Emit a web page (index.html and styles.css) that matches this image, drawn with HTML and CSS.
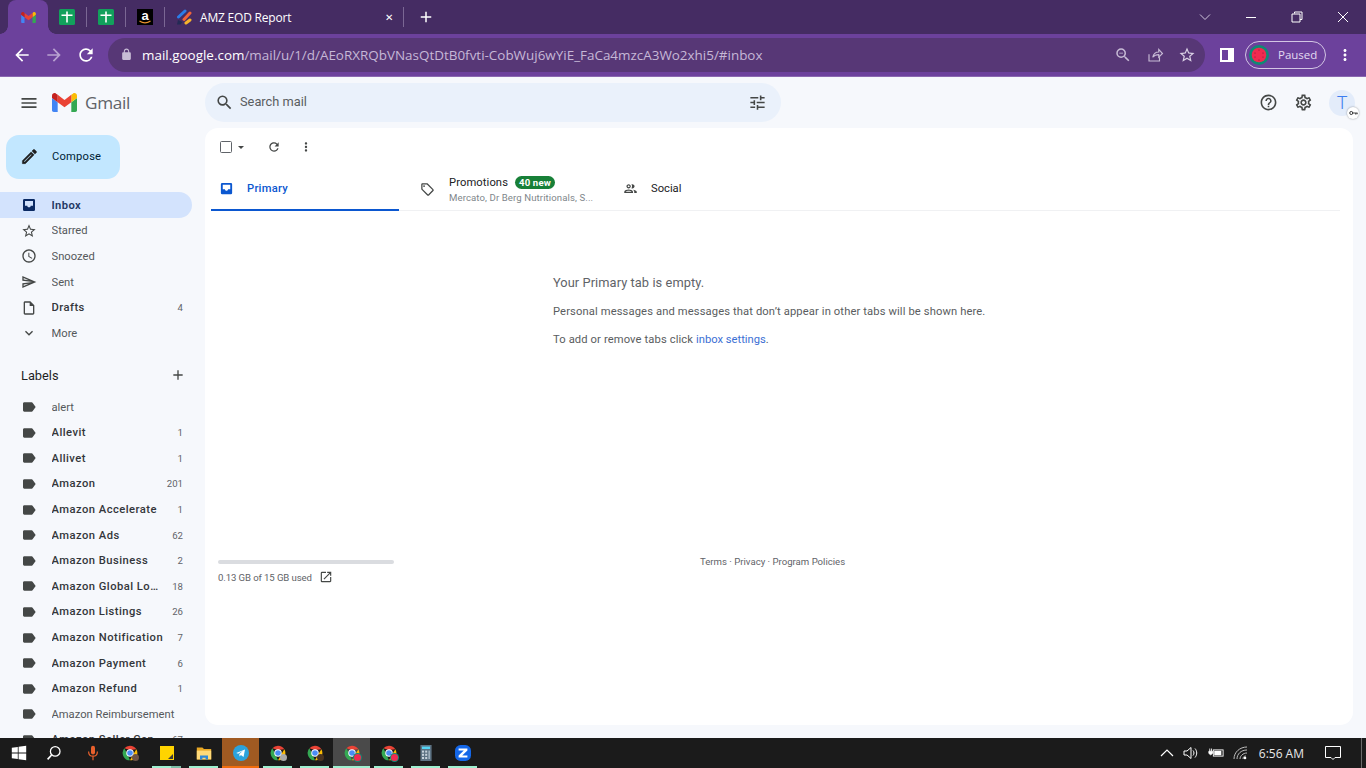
FILE: index.html
```html
<!DOCTYPE html>
<html lang="en">
<head>
<meta charset="utf-8">
<title>Gmail</title>
<link rel="stylesheet" href="styles.css">
</head>
<body>
<svg class="defs" width="0" height="0" aria-hidden="true">
  <symbol id="i-menu" viewBox="0 0 24 24"><path d="M3 18h18v-2H3v2zm0-5h18v-2H3v2zm0-7v2h18V6H3z"/></symbol>
  <symbol id="i-search" viewBox="0 0 24 24"><path d="M15.5 14h-.79l-.28-.27A6.471 6.471 0 0 0 16 9.5 6.5 6.5 0 1 0 9.5 16c1.61 0 3.09-.59 4.23-1.57l.27.28v.79l5 4.99L20.49 19l-4.99-5zm-6 0C7.01 14 5 11.99 5 9.5S7.01 5 9.5 5 14 7.01 14 9.5 11.99 14 9.5 14z"/></symbol>
  <symbol id="i-tune" viewBox="0 0 24 24"><path d="M3 17v2h6v-2H3zM3 5v2h10V5H3zm10 16v-2h8v-2h-8v-2h-2v6h2zM7 9v2H3v2h4v2h2V9H7zm14 4v-2H11v2h10zm-6-4h2V7h4V5h-4V3h-2v6z"/></symbol>
  <symbol id="i-help" viewBox="0 0 24 24"><path d="M11 18h2v-2h-2v2zm1-16C6.48 2 2 6.48 2 12s4.48 10 10 10 10-4.48 10-10S17.52 2 12 2zm0 18c-4.41 0-8-3.59-8-8s3.59-8 8-8 8 3.59 8 8-3.59 8-8 8zm0-14c-2.21 0-4 1.79-4 4h2c0-1.1.9-2 2-2s2 .9 2 2c0 2-3 1.75-3 5h2c0-2.25 3-2.5 3-5 0-2.21-1.79-4-4-4z"/></symbol>
  <symbol id="i-gear" viewBox="0 0 24 24"><path d="M19.43 12.98c.04-.32.07-.64.07-.98 0-.34-.03-.66-.07-.98l2.11-1.65c.19-.15.24-.42.12-.64l-2-3.46c-.09-.16-.26-.25-.44-.25-.06 0-.12.01-.17.03l-2.49 1c-.52-.4-1.08-.73-1.69-.98l-.38-2.65C14.46 2.18 14.25 2 14 2h-4c-.25 0-.46.18-.49.42l-.38 2.65c-.61.25-1.17.59-1.69.98l-2.49-1c-.06-.02-.12-.03-.18-.03-.17 0-.34.09-.43.25l-2 3.46c-.13.22-.07.49.12.64l2.11 1.65c-.04.32-.07.65-.07.98 0 .33.03.66.07.98l-2.11 1.65c-.19.15-.24.42-.12.64l2 3.46c.09.16.26.25.44.25.06 0 .12-.01.17-.03l2.49-1c.52.4 1.08.73 1.69.98l.38 2.65c.03.24.24.42.49.42h4c.25 0 .46-.18.49-.42l.38-2.65c.61-.25 1.17-.59 1.69-.98l2.49 1c.06.02.12.03.18.03.17 0 .34-.09.43-.25l2-3.46c.12-.22.07-.49-.12-.64l-2.11-1.65zm-1.98-1.71c.04.31.05.52.05.73 0 .21-.02.43-.05.73l-.14 1.13.89.7 1.08.84-.7 1.21-1.27-.51-1.04-.42-.9.68c-.43.32-.84.56-1.25.73l-1.06.43-.16 1.13-.2 1.35h-1.4l-.19-1.35-.16-1.13-1.06-.43c-.43-.18-.83-.41-1.23-.71l-.91-.7-1.06.43-1.27.51-.7-1.21 1.08-.84.89-.7-.14-1.13c-.03-.31-.05-.54-.05-.74s.02-.43.05-.73l.14-1.13-.89-.7-1.08-.84.7-1.21 1.27.51 1.04.42.9-.68c.43-.32.84-.56 1.25-.73l1.06-.43.16-1.13.2-1.35h1.39l.19 1.35.16 1.13 1.06.43c.43.18.83.41 1.23.71l.91.7 1.06-.43 1.27-.51.7 1.21-1.07.85-.89.7.14 1.13zM12 8c-2.21 0-4 1.79-4 4s1.79 4 4 4 4-1.79 4-4-1.79-4-4-4zm0 6c-1.1 0-2-.9-2-2s.9-2 2-2 2 .9 2 2-.9 2-2 2z"/></symbol>
  <symbol id="i-inbox" viewBox="0 0 24 24"><path fill-rule="evenodd" d="M19 3H5a2 2 0 0 0-2 2v14a2 2 0 0 0 2 2h14a2 2 0 0 0 2-2V5a2 2 0 0 0-2-2zM6 6h12v7h-3.5c0 1.4-1.1 2.5-2.5 2.5S9.500 14.400 9.500 13H6z"/></symbol>
  <symbol id="i-star" viewBox="0 0 24 24"><path d="M22 9.240l-7.190-.62L12 2 9.190 8.630 2 9.240l5.460 4.730L5.820 21 12 17.270 18.180 21l-1.630-7.030L22 9.240zM12 15.400l-3.760 2.270 1-4.280-3.320-2.880 4.380-.38L12 6.100l1.710 4.040 4.380.38-3.320 2.880 1 4.280L12 15.400z"/></symbol>
  <symbol id="i-clock" viewBox="0 0 24 24"><path d="M11.990 2C6.470 2 2 6.480 2 12s4.470 10 9.990 10C17.520 22 22 17.520 22 12S17.520 2 11.990 2zM12 20c-4.420 0-8-3.580-8-8s3.580-8 8-8 8 3.580 8 8-3.580 8-8 8zm.5-13H11v6l5.250 3.150.75-1.230-4.500-2.670z"/></symbol>
  <symbol id="i-send" viewBox="0 0 24 24"><path d="M4.010 6.030l7.510 3.220-7.520-1 .01-2.220m7.500 8.720L4 17.970v-2.220l7.510-1M2.010 3L2 10l15 2-15 2 .01 7L23 12 2.010 3z"/></symbol>
  <symbol id="i-draft" viewBox="0 0 24 24"><path d="M14 2H6c-1.100 0-2 .9-2 2v16c0 1.100.9 2 2 2h12c1.100 0 2-.9 2-2V8l-6-6zM6 20V4h7v5h5v11H6z"/></symbol>
  <symbol id="i-down" viewBox="0 0 24 24"><path d="M16.590 8.590L12 13.170 7.410 8.590 6 10l6 6 6-6z"/></symbol>
  <symbol id="i-label" viewBox="0 0 24 24"><path d="M17.630 5.840C17.270 5.330 16.670 5 16 5L5 5.010C3.900 5.010 3 5.900 3 7v10c0 1.100.9 1.990 2 1.990L16 19c.67 0 1.270-.33 1.630-.84L22 12l-4.370-6.160z"/></symbol>
  <symbol id="i-add" viewBox="0 0 24 24"><path d="M19 13h-6v6h-2v-6H5v-2h6V5h2v6h6v2z"/></symbol>
  <symbol id="i-refresh" viewBox="0 0 24 24"><path d="M17.650 6.350A7.958 7.958 0 0 0 12 4c-4.420 0-7.990 3.580-7.990 8s3.570 8 7.990 8c3.730 0 6.840-2.550 7.730-6h-2.080A5.990 5.990 0 0 1 12 18c-3.310 0-6-2.690-6-6s2.690-6 6-6c1.660 0 3.140.69 4.220 1.780L13 11h7V4l-2.350 2.350z"/></symbol>
  <symbol id="i-dots" viewBox="0 0 24 24"><path d="M12 8c1.100 0 2-.9 2-2s-.9-2-2-2-2 .9-2 2 .9 2 2 2zm0 2c-1.100 0-2 .9-2 2s.9 2 2 2 2-.9 2-2-.9-2-2-2zm0 6c-1.100 0-2 .9-2 2s.9 2 2 2 2-.9 2-2-.9-2-2-2z"/></symbol>
  <symbol id="i-tag" viewBox="0 0 24 24"><path d="M21.410 11.580l-9-9C12.050 2.220 11.550 2 11 2H4c-1.100 0-2 .9-2 2v7c0 .55.22 1.050.59 1.420l9 9c.36.36.86.58 1.410.58s1.050-.22 1.410-.59l7-7c.37-.36.59-.86.59-1.410s-.23-1.060-.59-1.420zM13 20.010L4 11V4h7v-.01l9 9-7 7.020z"/><circle cx="6.500" cy="6.500" r="1.500"/></symbol>
  <symbol id="i-people" viewBox="0 0 24 24"><path d="M9 13.750c-2.340 0-7 1.170-7 3.500V19h14v-1.750c0-2.330-4.660-3.500-7-3.500zM4.340 17c.84-.58 2.870-1.250 4.660-1.250s3.820.67 4.660 1.250H4.340zM9 12c1.930 0 3.500-1.570 3.500-3.500S10.930 5 9 5 5.500 6.570 5.500 8.500 7.070 12 9 12zm0-5c.83 0 1.500.67 1.500 1.500S9.830 10 9 10s-1.500-.67-1.500-1.500S8.170 7 9 7zm7.040 6.810c1.160.84 1.960 1.960 1.960 3.440V19h4v-1.750c0-2.020-3.500-3.170-5.960-3.440zM15 12c1.930 0 3.500-1.570 3.500-3.500S16.930 5 15 5c-.54 0-1.040.13-1.500.35.63.89 1 1.980 1 3.150s-.37 2.260-1 3.150c.46.22.96.35 1.500.35z"/></symbol>
  <symbol id="i-open" viewBox="0 0 24 24"><path d="M19 19H5V5h7V3H5a2 2 0 0 0-2 2v14a2 2 0 0 0 2 2h14c1.100 0 2-.9 2-2v-7h-2v7zM14 3v2h3.590l-9.830 9.830 1.410 1.410L19 6.410V10h2V3h-7z"/></symbol>
  <symbol id="i-edit" viewBox="0 0 24 24"><path stroke="currentColor" stroke-width=".6" d="M14.060 9.020l.92.92L5.920 19H5v-.92l9.060-9.060M17.660 3c-.25 0-.51.1-.7.29l-1.830 1.830 3.750 3.750 1.830-1.830c.39-.39.39-1.020 0-1.410l-2.340-2.340c-.2-.2-.45-.29-.71-.29zm-3.600 3.190L3 17.250V21h3.750L17.810 9.940l-3.750-3.750z"/></symbol>
  <symbol id="i-m" viewBox="52 42 88 66">
    <path fill="#4285f4" d="M58 108h14V74L52 59v43c0 3.320 2.690 6 6 6"/>
    <path fill="#34a853" d="M120 108h14c3.320 0 6-2.690 6-6V59l-20 15"/>
    <path fill="#fbbc04" d="M120 48v26l20-15v-8c0-7.420-8.470-11.650-14.400-7.200"/>
    <path fill="#ea4335" d="M72 74V48l24 18 24-18v26L96 92"/>
    <path fill="#c5221f" d="M52 51v8l20 15V48l-5.600-4.200c-5.940-4.450-14.400-.22-14.400 7.200"/>
  </symbol>
  <symbol id="i-sheet" viewBox="0 0 16 16">
    <rect width="16" height="16" rx="1.500" fill="#12a05c"/>
    <path fill="#fff" d="M7.200 2.500h1.600v3h4.700v1.500H8.800V13.500H7.200V7H2.500V5.500h4.700z"/>
  </symbol>
  <symbol id="i-chrome" viewBox="0 0 24 24">
    <path fill="#ea4335" d="M12 1a11 11 0 0 1 9.530 5.500L12 7.500 3.500 5A11 11 0 0 1 12 1z"/>
    <path fill="#fbbc04" d="M21.530 6.500A11 11 0 0 1 12 23l5-9z"/>
    <path fill="#34a853" d="M3.500 5L8 14l4 9A11 11 0 0 1 3.500 5z"/>
    <circle cx="12" cy="12" r="5.600" fill="#fff"/><circle cx="12" cy="12" r="4.200" fill="#4a8df5"/>
  </symbol>
</svg>

<header class="tabstrip">
  <div class="tab-active"><svg class="fav-m"><use href="#i-m"/></svg></div>
  <div class="pin"><svg class="fav"><use href="#i-sheet"/></svg></div>
  <div class="pin"><svg class="fav"><use href="#i-sheet"/></svg></div>
  <div class="pin">
    <svg class="fav" viewBox="0 0 16 16">
      <rect width="16" height="16" fill="#000"/>
      <text class="amz-a" x="8" y="11" text-anchor="middle">a</text>
      <path d="M2.500 12c3.500 2.300 7.500 2.300 11 0" fill="none" stroke="#e8912d" stroke-width="1.300"/>
    </svg>
  </div>
  <div class="pin-wide">
    <svg class="fav" viewBox="0 0 16 16">
      <path fill="#232a55" d="M1 15.500l1-4.500 4.500 2-2 2.500z"/>
      <path d="M2.500 8L9 2" stroke="#2b7de9" stroke-width="3" stroke-linecap="round"/>
      <path d="M8 10.500L14 4" stroke="#f0623a" stroke-width="3" stroke-linecap="round"/>
      <path d="M10 14l4-3" stroke="#f7b32b" stroke-width="3" stroke-linecap="round"/>
    </svg>
    <span class="tab-title">AMZ EOD Report</span>
    <span class="tab-x">✕</span>
  </div>
  <div class="newtab"><svg class="ico18 white"><use href="#i-add"/></svg></div>
  <div class="winctl">
    <svg class="wc" viewBox="0 0 12 12"><path d="M1 3.500l5 5 5-5" fill="none" stroke="#cfc6dc"/></svg>
    <svg class="wc" viewBox="0 0 12 12"><path d="M1 6.500h10" stroke="#fff"/></svg>
    <svg class="wc" viewBox="0 0 12 12"><path d="M3.500 2.500V1h7.500v7.500H9M1 3h8v8H1z" fill="none" stroke="#fff"/></svg>
    <svg class="wc" viewBox="0 0 12 12"><path d="M1 1l10 10M11 1L1 11" stroke="#fff"/></svg>
  </div>
</header>

<nav class="toolbar">
  <svg class="tb" viewBox="0 0 24 24"><path fill="#fff" d="M20 11H7.830l5.590-5.590L12 4l-8 8 8 8 1.410-1.410L7.830 13H20v-2z"/></svg>
  <svg class="tb dim" viewBox="0 0 24 24"><path fill="#b8a2d0" d="M12 4l-1.410 1.410L16.170 11H4v2h12.170l-5.580 5.590L12 20l8-8z"/></svg>
  <svg class="tb white"><use href="#i-refresh"/></svg>
  <div class="omni">
    <svg class="lock" viewBox="0 0 24 24"><path fill="#c8bcd6" d="M18 8h-1V6c0-2.760-2.240-5-5-5S7 3.240 7 6v2H6c-1.100 0-2 .9-2 2v10c0 1.100.9 2 2 2h12c1.100 0 2-.9 2-2V10c0-1.100-.9-2-2-2zM9 6c0-1.660 1.340-3 3-3s3 1.340 3 3v2H9V6z"/></svg>
    <span class="url"><span class="url-host">mail.google.com</span>/mail/u/1/d/AEoRXRQbVNasQtDtB0fvti-CobWuj6wYiE_FaCa4mzcA3Wo2xhi5/#inbox</span>
    <div class="omni-icons">
      <svg class="om" viewBox="0 0 24 24"><path fill="#c8bcd6" d="M15.500 14h-.79l-.28-.27A6.471 6.471 0 0 0 16 9.500 6.500 6.500 0 1 0 9.500 16c1.610 0 3.090-.59 4.230-1.570l.27.28v.79l5 4.990L20.490 19l-4.990-5zm-6 0C7.010 14 5 11.990 5 9.500S7.010 5 9.500 5 14 7.010 14 9.500 11.990 14 9.500 14zM7 9h5v1H7z"/></svg>
      <svg class="om" viewBox="0 0 24 24"><path fill="none" stroke="#c8bcd6" stroke-width="1.500" d="M4 11v9h14v-5M9 15c1-5 4-7 8-7V4.500l5 5.500-5 5v-3.500c-3.500 0-6 1-8 3.500z"/></svg>
      <svg class="om" viewBox="0 0 24 24"><path fill="#d9d0e4" d="M22 9.240l-7.190-.62L12 2 9.190 8.630 2 9.240l5.460 4.730L5.820 21 12 17.270 18.180 21l-1.630-7.030L22 9.240zM12 15.400l-3.760 2.270 1-4.280-3.320-2.880 4.380-.38L12 6.100l1.710 4.040 4.380.38-3.320 2.880 1 4.280L12 15.400z"/></svg>
    </div>
  </div>
  <svg class="panel" viewBox="0 0 14 14"><path fill="#fff" fill-rule="evenodd" d="M0 0h14v14H0zM2 2v10h6V2z"/></svg>
  <div class="profile">
    <svg class="melon" viewBox="0 0 20 20">
      <circle cx="10" cy="10" r="10" fill="#0f8a74"/><circle cx="10" cy="10" r="7.300" fill="#ef2b50"/>
      <g fill="#7d1a36"><circle cx="10" cy="5" r=".6"/><circle cx="14" cy="8" r=".6"/><circle cx="14" cy="12" r=".6"/><circle cx="10" cy="15" r=".6"/><circle cx="6" cy="12" r=".6"/><circle cx="6" cy="8" r=".6"/></g>
    </svg>
    <span class="paused">Paused</span>
  </div>
  <svg class="kebab white"><use href="#i-dots"/></svg>
</nav>

<div class="gmail">
  <aside class="side">
    <div class="brand">
      <svg class="ico20 grey"><use href="#i-menu"/></svg>
      <svg class="logo"><use href="#i-m"/></svg>
      <span class="wordmark">Gmail</span>
    </div>
    <button class="compose"><svg class="ico19 ink"><use href="#i-edit"/></svg><span>Compose</span></button>
    <ul class="nav">
      <li class="row current"><svg class="ri navy"><use href="#i-inbox"/></svg><span class="name">Inbox</span></li>
      <li class="row"><svg class="ri"><use href="#i-star"/></svg><span class="name">Starred</span></li>
      <li class="row"><svg class="ri"><use href="#i-clock"/></svg><span class="name">Snoozed</span></li>
      <li class="row"><svg class="ri"><use href="#i-send"/></svg><span class="name">Sent</span></li>
      <li class="row strong"><svg class="ri"><use href="#i-draft"/></svg><span class="name">Drafts</span><span class="count">4</span></li>
      <li class="row"><svg class="ri"><use href="#i-down"/></svg><span class="name">More</span></li>
    </ul>
    <div class="labels-head"><span>Labels</span><svg class="ico16 grey"><use href="#i-add"/></svg></div>
    <ul class="nav">
      <li class="row"><svg class="ri"><use href="#i-label"/></svg><span class="name">alert</span></li>
      <li class="row strong"><svg class="ri"><use href="#i-label"/></svg><span class="name">Allevit</span><span class="count">1</span></li>
      <li class="row strong"><svg class="ri"><use href="#i-label"/></svg><span class="name">Allivet</span><span class="count">1</span></li>
      <li class="row strong"><svg class="ri"><use href="#i-label"/></svg><span class="name">Amazon</span><span class="count">201</span></li>
      <li class="row strong"><svg class="ri"><use href="#i-label"/></svg><span class="name">Amazon Accelerate</span><span class="count">1</span></li>
      <li class="row strong"><svg class="ri"><use href="#i-label"/></svg><span class="name">Amazon Ads</span><span class="count">62</span></li>
      <li class="row strong"><svg class="ri"><use href="#i-label"/></svg><span class="name">Amazon Business</span><span class="count">2</span></li>
      <li class="row strong"><svg class="ri"><use href="#i-label"/></svg><span class="name">Amazon Global Logistics</span><span class="count">18</span></li>
      <li class="row strong"><svg class="ri"><use href="#i-label"/></svg><span class="name">Amazon Listings</span><span class="count">26</span></li>
      <li class="row strong"><svg class="ri"><use href="#i-label"/></svg><span class="name">Amazon Notification</span><span class="count">7</span></li>
      <li class="row strong"><svg class="ri"><use href="#i-label"/></svg><span class="name">Amazon Payment</span><span class="count">6</span></li>
      <li class="row strong"><svg class="ri"><use href="#i-label"/></svg><span class="name">Amazon Refund</span><span class="count">1</span></li>
      <li class="row"><svg class="ri"><use href="#i-label"/></svg><span class="name">Amazon Reimbursement</span></li>
      <li class="row strong"><svg class="ri"><use href="#i-label"/></svg><span class="name">Amazon Seller Central</span><span class="count">67</span></li>
    </ul>
  </aside>

  <div class="content">
    <div class="topbar">
      <div class="searchbox">
        <svg class="ico19 dark"><use href="#i-search"/></svg>
        <span class="placeholder">Search mail</span>
        <svg class="ico19 dark tune"><use href="#i-tune"/></svg>
      </div>
      <div class="top-actions">
        <svg class="ico19 grey"><use href="#i-help"/></svg>
        <svg class="ico19 grey"><use href="#i-gear"/></svg>
        <div class="avatar">
          <span>T</span>
          <span class="key"><svg class="key-ico" viewBox="0 0 10 6"><circle cx="2.500" cy="3" r="1.700" fill="none" stroke="#222" stroke-width="1"/><path d="M4 3h5.500M7.500 3v1.800M9 3v1.400" stroke="#222" stroke-width=".9" fill="none"/></svg></span>
        </div>
      </div>
    </div>
    <main class="card">
      <div class="actions">
        <span class="checkbox"></span><span class="caret"></span>
        <svg class="ico14 dark refresh"><use href="#i-refresh"/></svg>
        <svg class="ico14 dark dots"><use href="#i-dots"/></svg>
      </div>
      <div class="tabs">
        <div class="gtab primary"><svg class="ti blue"><use href="#i-inbox"/></svg><span>Primary</span></div>
        <div class="gtab promos">
          <svg class="ti"><use href="#i-tag"/></svg>
          <div class="promo-text">
            <div class="promo-line"><span>Promotions</span><span class="badge">40 new</span></div>
            <div class="promo-sub">Mercato, Dr Berg Nutritionals, S...</div>
          </div>
        </div>
        <div class="gtab social"><svg class="ti"><use href="#i-people"/></svg><span>Social</span></div>
      </div>
      <section class="empty">
        <h2>Your Primary tab is empty.</h2>
        <p>Personal messages and messages that don’t appear in other tabs will be shown here.</p>
        <p>To add or remove tabs click <a>inbox settings</a>.</p>
      </section>
      <footer class="foot">
        <div class="storage">
          <div class="meter"></div>
          <div class="used"><span>0.13 GB of 15 GB used</span><svg class="ico14 grey"><use href="#i-open"/></svg></div>
        </div>
        <div class="terms">Terms · Privacy · Program Policies</div>
      </footer>
    </main>
  </div>
</div>

<footer class="taskbar">
  <div class="tk"><svg class="t20" viewBox="0 0 20 20"><path fill="#fff" d="M1 3.500l7.500-1V9.500H1zM9.500 2.300L19 1v8.500H9.500zM1 10.500h7.500v7L1 16.500zM9.500 10.500H19V19l-9.500-1.300z"/></svg></div>
  <div class="tk"><svg class="t20 search-ico" viewBox="0 0 20 20"><circle cx="11.500" cy="8" r="6" fill="none" stroke="#fff" stroke-width="1.600"/><path d="M7 12.500L2 18" stroke="#fff" stroke-width="2"/></svg></div>
  <div class="tk"><svg class="t20" viewBox="0 0 20 20"><rect x="7.500" y="1" width="5" height="11" rx="2.500" fill="#e8602c"/><path d="M4.500 8c0 4 2.500 6 5.500 6s5.500-2 5.500-6M10 14v5" fill="none" stroke="#e8602c" stroke-width="1.500"/></svg></div>
  <div class="tk"><svg class="t20"><use href="#i-chrome"/></svg><span class="tb-badge brown"></span></div>
  <div class="tk on split"><svg class="t14" viewBox="0 0 14 14"><path fill="#ffd400" d="M0 0h14v14H0z"/><path fill="#3a3a3a" d="M13 8v5H8z"/></svg></div>
  <div class="tk on"><svg class="t20" viewBox="0 0 20 20"><path fill="#e9a825" d="M1 3h7l2 2h9v13H1z"/><path fill="#ffd978" d="M1 7h18v11H1z"/><path fill="#2f88d8" d="M5 13h10v5h-3v-2H8v2H5z"/></svg></div>
  <div class="tk tg"><svg class="t20" viewBox="0 0 20 20"><circle cx="10" cy="10" r="10" fill="#2ca3dc"/><path fill="#fff" d="M4 10l11-4.500-1.800 9.500-3.300-2.400-1.700 1.700-.3-3 4.600-4-6 3.500z"/></svg></div>
  <div class="tk on"><svg class="t20"><use href="#i-chrome"/></svg><span class="tb-badge grey2"></span></div>
  <div class="tk on"><svg class="t20"><use href="#i-chrome"/></svg><span class="tb-badge dark2"></span></div>
  <div class="tk on cur"><svg class="t20"><use href="#i-chrome"/></svg><span class="tb-badge melon2"></span></div>
  <div class="tk on"><svg class="t20"><use href="#i-chrome"/></svg><span class="tb-badge melon2"></span></div>
  <div class="tk on"><svg class="t20" viewBox="0 0 20 20"><rect x="3" y="0" width="14" height="20" fill="#5d7384"/><rect x="5" y="2" width="10" height="3" fill="#54d5f5"/><g fill="#c7d3dc"><rect x="5" y="7" width="2.500" height="2.500"/><rect x="9" y="7" width="2.500" height="2.500"/><rect x="5" y="11" width="2.500" height="2.500"/><rect x="9" y="11" width="2.500" height="2.500"/><rect x="5" y="15" width="2.500" height="2.500"/><rect x="9" y="15" width="2.500" height="2.500"/></g><rect x="13" y="7" width="2" height="10.500" fill="#9fb1bf"/></svg></div>
  <div class="tk on"><svg class="t20" viewBox="0 0 20 20"><rect width="20" height="20" rx="7" fill="#1467e8"/><path fill="#fff" d="M4.500 4.500h11v2.500L9 13h6.500v2.500h-11V13L11 7H4.500z"/></svg></div>
  <div class="tray">
    <svg class="ty chev" viewBox="0 0 16 16"><path d="M2 11l6-6 6 6" fill="none" stroke="#fff" stroke-width="1.200"/></svg>
    <svg class="ty" viewBox="0 0 16 16"><path d="M1 6h3l4-3.500v11L4 10H1zM10 5.500c1.300 1.500 1.300 3.500 0 5M12 3.500c2.300 2.700 2.300 6.300 0 9" fill="none" stroke="#fff"/></svg>
    <svg class="ty" viewBox="0 0 18 16"><rect x="6" y="4.500" width="11" height="7" fill="none" stroke="#fff"/><rect x="7" y="5.500" width="8" height="5" fill="#fff"/><path d="M1 6h4v2.500L3 10 1 8.500zM2 3v3M4 3v3" stroke="#fff" fill="#fff"/></svg>
    <svg class="ty" viewBox="0 0 16 16"><path d="M1 14C1 7 7 2 14 2M4 14c0-5 4-9 10-9M7 14c0-3 3-6 7-6M10 14c0-2 1-3 3-3" fill="none" stroke="#bdbdbd"/><circle cx="12" cy="13" r="1.300" fill="#fff"/></svg>
  </div>
  <div class="clock">6:56 AM</div>
  <svg class="notif" viewBox="0 0 16 16"><path d="M.5 1.500h15v11H10l-2 2-2-2H.5z" fill="none" stroke="#fff"/></svg>
  <div class="desk"></div>
</footer>
</body>
</html>
```

FILE: styles.css
```css
* { box-sizing: border-box; }
html, body { margin: 0; height: 100%; overflow: hidden; }
body {
  display: flex;
  flex-direction: column;
  height: 768px;
  width: 1366px;
  font-family: Roboto, "Liberation Sans", sans-serif;
  font-size: 11.2px;
  color: #55585b;
}
ul { list-style: none; margin: 0; padding: 0; }
.defs { position: absolute; }
svg { display: block; flex: none; fill: currentColor; }
.white { color: #fff; }
.grey { color: #444746; }
.dark { color: #444746; }
.ink { color: #1f1f1f; }
.navy { color: #0b2a63; }
.blue { color: #0b57d0; }
.ico14 { width: 14px; height: 14px; }
.ico16 { width: 16px; height: 16px; }
.ico18 { width: 18px; height: 18px; }
.ico19 { width: 19px; height: 19px; }
.ico20 { width: 20px; height: 20px; }

/* browser chrome */
.tabstrip {
  height: 34px;
  flex: none;
  display: flex;
  align-items: center;
  padding-left: 8px;
  background: #452c63;
  color: #fff;
  font-family: "Open Sans", "Liberation Sans", sans-serif;
}
.tab-active {
  position: relative;
  width: 40px;
  height: 34px;
  background: #6c419c;
  border-radius: 8px 8px 0 0;
  display: flex;
  align-items: center;
  justify-content: center;
}
.tab-active::before,
.tab-active::after {
  content: "";
  position: absolute;
  bottom: 0;
  width: 8px;
  height: 8px;
}
.tab-active::before { left: -8px; background: radial-gradient(circle at 0 0, transparent 7.5px, #6c419c 8px); }
.tab-active::after { right: -8px; background: radial-gradient(circle at 100% 0, transparent 7.5px, #6c419c 8px); }
.fav-m { width: 15px; height: 11px; }
.fav { width: 16px; height: 16px; }
.pin {
  width: 39px;
  height: 20px;
  display: flex;
  align-items: center;
  justify-content: center;
  border-right: 1px solid #7b6794;
}
.amz-a { font: 700 13px "Liberation Sans", sans-serif; fill: #fff; }
.pin-wide {
  width: 239px;
  height: 20px;
  display: flex;
  align-items: center;
  padding-left: 11px;
  border-right: 1px solid #7b6794;
}
.tab-title { margin-left: 8px; font-size: 12px; letter-spacing: -.2px; flex: 1; color: #fff; }
.tab-x { font-size: 10px; margin-right: 10px; }
.newtab { margin-left: 13px; }
.winctl { margin-left: auto; display: flex; gap: 34px; padding-right: 17px; }
.wc { width: 12px; height: 12px; stroke-width: 1; }

.toolbar {
  height: 43px;
  flex: none;
  display: flex;
  align-items: center;
  background: #6c419c;
  border-bottom: 1px solid #8a68b0;
  padding-left: 12px;
  padding-bottom: 1px;
}
.tb { width: 20px; height: 20px; margin-right: 12px; }
.omni {
  width: 1097px;
  height: 34px;
  margin-left: 0;
  padding: 0 9px 0 12px;
  border-radius: 17px;
  background: #573776;
  display: flex;
  align-items: center;
}
.lock { width: 13px; height: 13px; }
.url {
  margin-left: 9px;
  font-family: "Open Sans", "Liberation Sans", sans-serif;
  font-size: 13.450px;
  color: #c6b8d6;
  white-space: nowrap;
}
.url-host { color: #fff; }
.omni-icons { margin-left: auto; display: flex; gap: 14px; }
.om { width: 18px; height: 18px; }
.panel { width: 14px; height: 14px; margin-left: 15px; }
.profile {
  margin-left: 11px;
  width: 81px;
  height: 28px;
  border: 1px solid #d3c6e4;
  border-radius: 14px;
  display: flex;
  align-items: center;
  padding-left: 3px;
}
.melon { width: 20px; height: 20px; }
.paused {
  margin-left: 9px;
  font-family: "Open Sans", "Liberation Sans", sans-serif;
  font-size: 11.500px;
  color: #e3daf0;
}
.kebab { width: 18px; height: 18px; margin-left: 10px; }

/* gmail */
.gmail {
  flex: 1;
  min-height: 0;
  display: flex;
  background: #f6f8fc;
  overflow: hidden;
}
.side { width: 205px; flex: none; }
.brand {
  height: 51px;
  display: flex;
  align-items: center;
  padding-left: 19px;
}
.logo { width: 25px; height: 19px; margin-left: 13px; }
.wordmark {
  margin-left: 8px;
  font-family: "Open Sans", Roboto, sans-serif;
  font-size: 17.200px;
  color: #5f6368;
  letter-spacing: -.3px;
}
.compose {
  margin: 7px 0 13px 6px;
  width: 114px;
  height: 44px;
  border: 0;
  border-radius: 13px;
  background: #c2e7ff;
  display: flex;
  align-items: center;
  padding: 0 0 2px 14px;
  font: 400 11.200px Roboto, sans-serif;
  letter-spacing: .2px;
  color: #001d35;
  gap: 13px;
}
.row {
  height: 25.600px;
  width: 192px;
  display: flex;
  align-items: center;
  padding: 1px 9px 0 21px;
  border-radius: 0 13px 13px 0;
  white-space: nowrap;
}
.ri { width: 16px; height: 16px; color: #444746; }
.row .name {
  margin-left: 14.500px;
  flex: 1;
  min-width: 0;
  overflow: hidden;
  text-overflow: ellipsis;
}
.current { background: #d3e3fd; font-weight: 600; color: #1f3763; letter-spacing: .4px; }
.current .ri { color: #0b2a63; }
.strong .name { font-weight: 500; color: #33363a; letter-spacing: .47px; }
.count { font-size: 9.600px; color: #5f6368; margin-left: 8px; }
.labels-head {
  height: 48.300px;
  width: 192px;
  display: flex;
  align-items: center;
  justify-content: space-between;
  padding: 15px 6px 4px 21px;
  font-size: 12.800px;
  color: #1f1f1f;
}

.content { flex: 1; min-width: 0; padding-bottom: 13px; display: flex; flex-direction: column; }
.topbar {
  height: 51px;
  flex: none;
  display: flex;
  align-items: flex-start;
  padding-top: 6px;
}
.searchbox {
  width: 576px;
  height: 39px;
  border-radius: 20px;
  background: #eaf1fb;
  display: flex;
  align-items: center;
  padding: 0 14px 0 10px;
  gap: 6px;
}
.placeholder { font-size: 12.800px; color: #5a5d60; flex: 1; padding-bottom: 2px; }
.tune { color: #444746; }
.top-actions {
  margin-left: auto;
  display: flex;
  align-items: center;
  gap: 16px;
  height: 39px;
  padding-right: 11px;
}
.avatar {
  position: relative;
  width: 26px;
  height: 26px;
  border-radius: 50%;
  background: #e3ecfa;
  color: #3b7df0;
  font-size: 18px;
  font-weight: 300;
  display: flex;
  align-items: center;
  justify-content: center;
}
.key {
  position: absolute;
  right: -4px;
  bottom: -3px;
  width: 12px;
  height: 12px;
  border-radius: 50%;
  background: #fff;
  display: flex;
  align-items: center;
  justify-content: center;
  box-shadow: 0 0 2px rgba(0,0,0,.4);
}
.key-ico { width: 9px; height: 6px; }
.card {
  flex: 1;
  width: 1148px;
  background: #fff;
  border-radius: 13px;
  display: flex;
  flex-direction: column;
}
.actions {
  height: 38px;
  display: flex;
  align-items: center;
  padding-left: 15px;
  flex: none;
}
.checkbox { width: 12px; height: 12px; border: 1.500px solid #5f6368; border-radius: 1.500px; }
.caret {
  margin-left: 6px;
  border: 3.500px solid transparent;
  border-top-color: #444746;
  border-bottom: 0;
}
.refresh { margin-left: 23px; }
.dots { margin-left: 18px; }
.tabs {
  height: 45px;
  flex: none;
  margin: 0 13px 0 6px;
  display: flex;
  border-bottom: 1px solid #f0f1f3;
}
.gtab { display: flex; align-items: center; height: 45px; color: #202124; }
.ti { width: 15px; height: 15px; color: #444746; }
.primary {
  width: 188px;
  padding-left: 8px;
  padding-top: 1px;
  gap: 13px;
  color: #0b57d0;
  font-weight: 500;
  letter-spacing: .25px;
  border-bottom: 2.500px solid #0b57d0;
}
.primary .ti { color: #0b57d0; }
.promos { width: 206px; padding-left: 21px; gap: 14px; padding-top: 1px; }
.promo-text { display: flex; flex-direction: column; gap: 3px; padding-top: 1px; }
.promo-line { display: flex; align-items: center; gap: 7px; letter-spacing: .1px; }
.badge {
  background: #188038;
  color: #fff;
  font-size: 9.600px;
  font-weight: 700;
  letter-spacing: .15px;
  line-height: 13px;
  padding: 0 4px;
  border-radius: 7px;
}
.promo-sub { font-size: 9.600px; color: #80868b; letter-spacing: .1px; }
.social { padding-left: 18px; gap: 13px; }
.empty { padding: 63px 0 0 348px; flex: none; letter-spacing: .12px; }
.empty h2 { margin: 0 0 14px; font-size: 12.800px; font-weight: 400; color: #5f6368; line-height: 17px; letter-spacing: .08px; }
.empty p { margin: 0 0 14px; line-height: 14px; color: #5a5d60; }
.empty a { color: #3b6fd4; letter-spacing: 0; }
.foot {
  margin-top: 199px;
  display: flex;
  padding-left: 13px;
  font-size: 9.600px;
  color: #5f6368;
}
.meter { width: 176px; height: 4px; border-radius: 2px; background: #dadce0; }
.used { display: flex; align-items: center; gap: 7px; margin-top: 6px; letter-spacing: -.1px; }
.terms { margin-left: 306px; margin-top: -4px; }

/* taskbar */
.taskbar {
  height: 30px;
  flex: none;
  display: flex;
  align-items: stretch;
  background: #1b1b1b;
  color: #fff;
  font-family: "Open Sans", "Liberation Sans", sans-serif;
}
.tk {
  width: 37px;
  position: relative;
  display: flex;
  align-items: center;
  justify-content: center;
}
.t20 { width: 16px; height: 16px; }
.t14 { width: 14px; height: 14px; }
.search-ico { margin-right: 3px; }
.on::after {
  content: "";
  position: absolute;
  left: 4px;
  right: 4px;
  bottom: 0;
  height: 2px;
  background: #9ff0d0;
}
.split::after { background: linear-gradient(90deg, #9ff0d0 0 19px, #7dbfa6 19px); }
.cur { background: #4a4a4a; }
.cur::after { left: 0; right: 0; }
.tg { background: #a05a22; }
.tg::after {
  content: "";
  position: absolute;
  left: 0;
  right: 0;
  bottom: 0;
  height: 2px;
  background: #f26c0d;
}
.tb-badge {
  position: absolute;
  right: 9px;
  bottom: 7px;
  width: 7px;
  height: 7px;
  border-radius: 50%;
}
.brown { background: #6d5346; }
.grey2 { background: #a9a9a9; }
.dark2 { background: #4a3522; }
.melon2 { background: #ef2b50; box-shadow: 0 0 0 1px #0f8a74; }
.tray { margin-left: auto; display: flex; align-items: center; gap: 9px; }
.ty { width: 16px; height: 16px; }
.chev { margin-right: -1px; }
.clock { margin-left: 10px; font-size: 12px; color: #e8e8e8; display: flex; align-items: center; }
.notif { width: 16px; height: 16px; align-self: center; margin: 0 20px 0 21px; }
.desk { width: 1px; margin: 0 4px 0 0; background: #6a6a6a; }
```
